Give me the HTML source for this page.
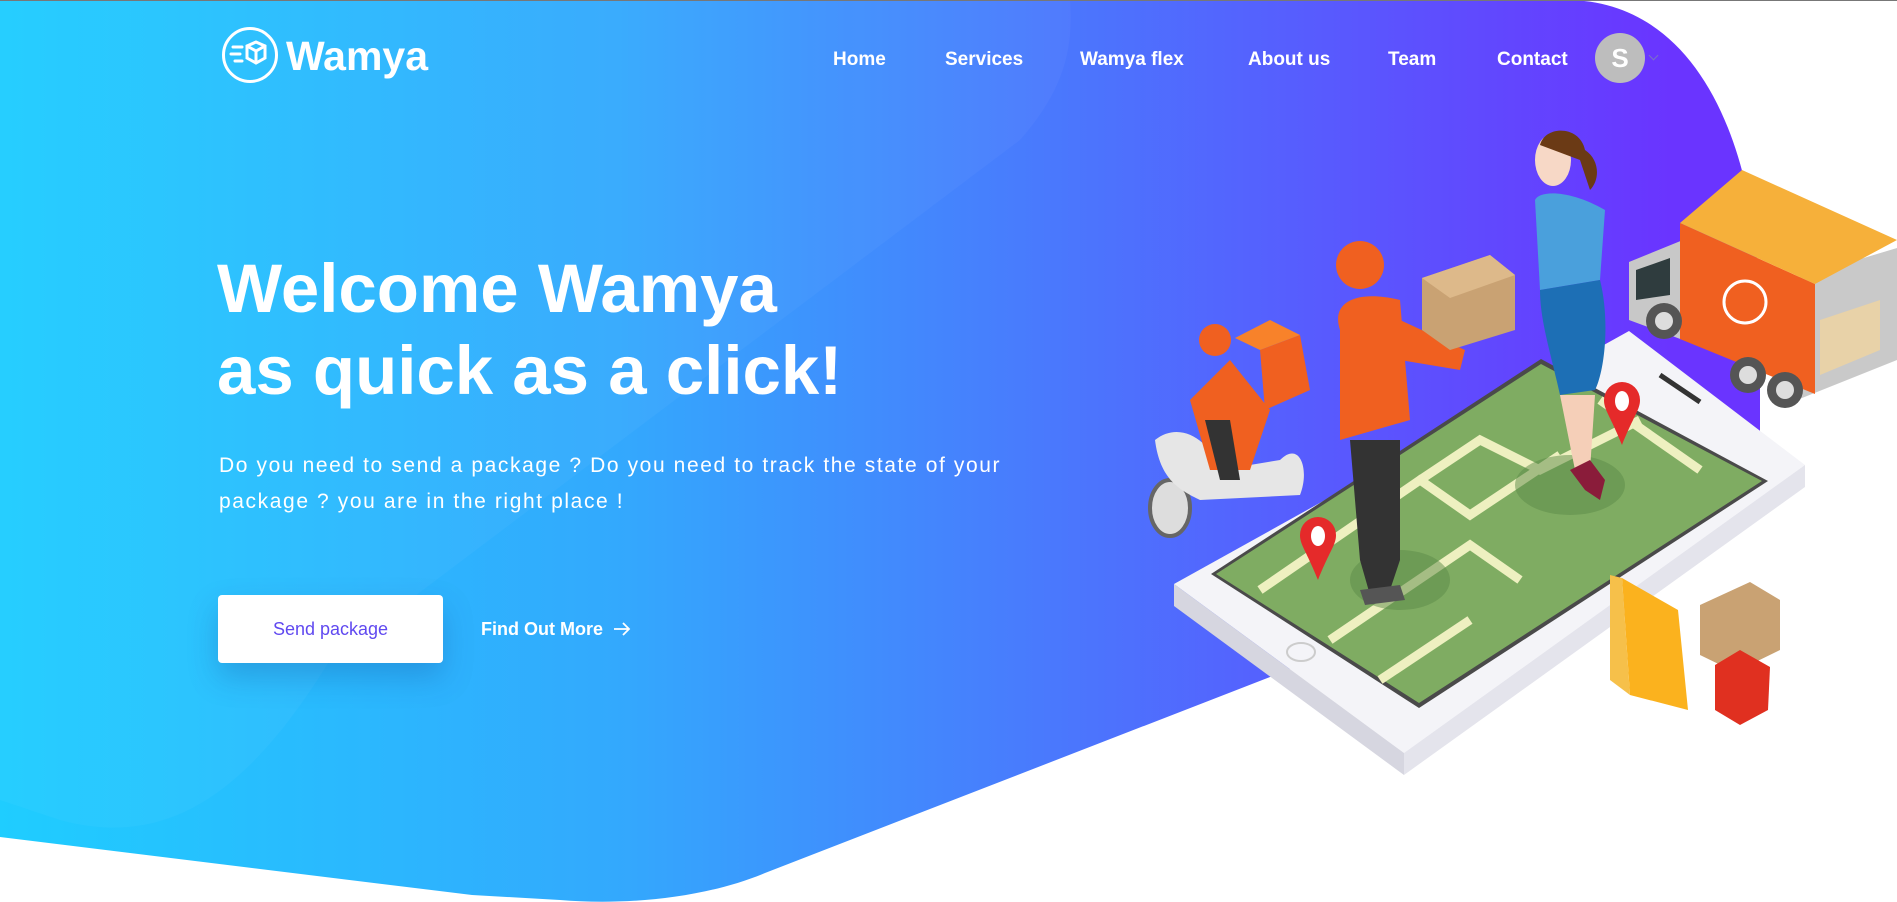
<!DOCTYPE html>
<html><head><meta charset="utf-8"><style>
html,body{margin:0;padding:0;}
body{width:1897px;height:902px;overflow:hidden;background:#fff;position:relative;font-family:"Liberation Sans",sans-serif;}
svg.bg{position:absolute;left:0;top:0;}
.topline{position:absolute;left:0;top:0;width:1897px;height:1px;background:#777;}
.logo{position:absolute;left:222px;top:27px;width:56px;height:56px;border:3px solid #fff;border-radius:50%;box-sizing:border-box;}
.logotext{position:absolute;left:286px;top:33px;color:#fff;font-weight:bold;font-size:41px;}
.nav{position:absolute;top:49px;color:#fff;font-size:19px;font-weight:bold;}
.avatar{position:absolute;left:1595px;top:33px;width:50px;height:50px;border-radius:50%;background:#bdbdbd;color:#fff;font-size:26px;font-weight:bold;text-align:center;line-height:50px;}
.caret{position:absolute;left:1650px;top:52px;width:6px;height:6px;border-right:1.5px solid #7a70c8;border-bottom:1.5px solid #7a70c8;transform:rotate(45deg);}
h1{position:absolute;left:217px;top:248px;margin:0;color:#fff;font-size:69px;line-height:82px;font-weight:bold;letter-spacing:0px;}
p{position:absolute;left:219px;top:448px;margin:0;color:#fff;font-size:21px;line-height:36px;width:1000px;letter-spacing:1.6px;}
.btn{position:absolute;left:218px;top:595px;width:225px;height:68px;background:#fff;border-radius:4px;box-shadow:0 14px 30px rgba(20,60,140,.25);color:#6049f0;font-size:18px;text-align:center;line-height:68px;}
.more{position:absolute;left:481px;top:619px;color:#fff;font-size:18px;font-weight:bold;}
</style></head><body>
<svg class="bg" width="1897" height="902" viewBox="0 0 1897 902">
<defs>
<linearGradient id="g" x1="0" y1="0" x2="1" y2="0">
<stop offset="0" stop-color="#1fcdff"/>
<stop offset="0.35" stop-color="#33a9fd"/>
<stop offset="0.6" stop-color="#4a78fd"/>
<stop offset="0.95" stop-color="#6a34ff"/>
</linearGradient>
</defs>
<path d="M0,0 H1566 C1700,0 1760,150 1760,320 L1760,470 L1283,672 L765,873 C700,900 620,905 560,900 L472,895 L0,837 Z" fill="url(#g)"/>
<path d="M0,0 H1070 C1075,60 1055,100 1020,140 L330,660 C250,790 170,850 60,820 L0,800 Z" fill="#fff" opacity="0.035"/>
<polygon points="1174,584 1404,753 1805,465 1629,331" fill="#f4f4f8"/>
<polygon points="1174,584 1404,753 1404,775 1174,606" fill="#d6d6e0"/>
<polygon points="1404,753 1805,465 1805,487 1404,775" fill="#e4e4ec"/>
<polygon points="1211,574 1419,708 1768,481 1541,359" fill="#4a4a4a"/>
<polygon points="1216,574 1419,703 1762,481 1541,364" fill="#7fac62"/>
<g stroke="#eef0c0" stroke-width="9" fill="none">
<path d="M1260,590 L1420,480 L1470,515 L1560,455"/>
<path d="M1330,640 L1470,545 L1520,580"/>
<path d="M1420,480 L1480,440 L1540,470 L1640,420"/>
<path d="M1600,400 L1700,470"/>
<path d="M1380,680 L1470,620"/>
</g>
<ellipse cx="1301" cy="652" rx="14" ry="9" fill="none" stroke="#ccc" stroke-width="2"/>
<line x1="1660" y1="375" x2="1700" y2="402" stroke="#333" stroke-width="5"/>
<path d="M1318,580 c-12,-30 -18,-35 -18,-45 a18,18 0 0 1 36,0 c0,10 -6,15 -18,45z" fill="#e52a2a"/>
<ellipse cx="1318" cy="536" rx="7" ry="10" fill="#fff"/>
<path d="M1622,445 c-12,-30 -18,-35 -18,-45 a18,18 0 0 1 36,0 c0,10 -6,15 -18,45z" fill="#e52a2a"/>
<ellipse cx="1622" cy="401" rx="7" ry="10" fill="#fff"/>
<ellipse cx="1400" cy="580" rx="50" ry="30" fill="#5c8a48" opacity=".5"/>
<ellipse cx="1570" cy="485" rx="55" ry="30" fill="#5c8a48" opacity=".5"/>
<polygon points="1629,262 1683,240 1683,340 1629,320" fill="#c8c8c8"/>
<polygon points="1636,270 1670,258 1670,295 1636,300" fill="#2f3c3e"/>
<polygon points="1797,278 1897,248 1897,360 1797,400" fill="#c9c9c9"/>
<polygon points="1680,223 1815,284 1815,394 1680,339" fill="#f06020"/>
<polygon points="1680,223 1742,170 1897,240 1815,284" fill="#f6b03a"/>
<circle cx="1745" cy="302" r="21" fill="none" stroke="#fff" stroke-width="3"/>
<polygon points="1820,320 1880,300 1880,350 1820,375" fill="#e8d2a8"/>
<circle cx="1664" cy="321" r="18" fill="#555"/><circle cx="1664" cy="321" r="9" fill="#ddd"/>
<circle cx="1748" cy="375" r="18" fill="#555"/><circle cx="1748" cy="375" r="9" fill="#ddd"/>
<circle cx="1785" cy="390" r="18" fill="#555"/><circle cx="1785" cy="390" r="9" fill="#ddd"/>
<ellipse cx="1170" cy="508" rx="20" ry="28" fill="#ddd" stroke="#666" stroke-width="4"/>
<path d="M1155,440 C1180,420 1210,440 1220,470 L1280,460 C1300,440 1310,470 1300,495 L1200,500 C1180,490 1160,480 1155,440z" fill="#e6e6e6"/>
<path d="M1190,400 L1230,360 L1270,410 L1250,470 L1210,470z" fill="#f06020"/>
<polygon points="1260,350 1300,335 1310,390 1265,410" fill="#f06020"/>
<polygon points="1235,338 1270,320 1300,335 1260,350" fill="#f8822a"/>
<circle cx="1215" cy="340" r="16" fill="#f06020"/>
<path d="M1205,420 L1220,480 L1240,480 L1230,420z" fill="#333"/>
<path d="M1340,330 C1330,300 1360,290 1400,300 L1410,420 L1340,440z" fill="#f06020"/>
<path d="M1400,320 L1465,350 L1460,370 L1400,360z" fill="#f06020"/>
<circle cx="1360" cy="265" r="24" fill="#f06020"/>
<path d="M1345,440 L1400,440 L1400,560 L1390,590 L1370,595 L1360,560 L1350,440z" fill="#333"/>
<path d="M1360,590 L1400,585 L1405,600 L1365,605z" fill="#555"/>
<polygon points="1422,278 1490,255 1515,275 1515,330 1450,350 1422,330" fill="#c9a273"/>
<polygon points="1422,278 1490,255 1515,275 1450,298" fill="#ddb98a"/>
<ellipse cx="1553" cy="160" rx="18" ry="26" fill="#f7d8c6"/>
<path d="M1540,145 C1545,125 1580,125 1585,150 C1600,160 1600,180 1590,190 L1580,160z" fill="#6b3a15"/>
<path d="M1535,200 C1540,190 1570,190 1605,210 L1600,280 L1540,290z" fill="#4aa0dc"/>
<path d="M1540,290 L1600,280 C1610,320 1605,370 1595,390 L1560,395 C1550,350 1540,320 1540,290z" fill="#1d6fb5"/>
<path d="M1560,395 L1575,470 L1580,480 L1590,470 L1595,395z" fill="#f5cfb8"/>
<path d="M1570,470 L1585,490 L1600,500 L1605,480 L1590,460z" fill="#8a1c3a"/>
<polygon points="1622,578 1678,610 1688,710 1630,695" fill="#fbb21e"/>
<polygon points="1610,575 1622,578 1630,695 1610,680" fill="#f6c04a"/>
<polygon points="1700,605 1750,582 1780,600 1780,650 1735,672 1700,655" fill="#c9a273"/>
<polygon points="1715,665 1740,650 1770,667 1768,710 1740,725 1715,710" fill="#e03020"/>
</svg>
<div class="topline"></div>
<div class="logo"><svg width="50" height="50" viewBox="0 0 50 50"><g stroke="#fff" stroke-width="3" fill="none" stroke-linecap="round"><path d="M8,17 H17 M6,24 H15 M10,31 H17"/><path d="M22,16 L31,12 L40,16 L40,28 L31,33 L22,28 Z M22,16 L31,21 L40,16 M31,21 V33"/></g></svg></div>
<div class="logotext">Wamya</div>
<div class="nav" style="left:833px">Home</div>
<div class="nav" style="left:945px">Services</div>
<div class="nav" style="left:1080px">Wamya flex</div>
<div class="nav" style="left:1248px">About us</div>
<div class="nav" style="left:1388px">Team</div>
<div class="nav" style="left:1497px">Contact</div>
<div class="avatar">S</div>
<div class="caret"></div>
<h1>Welcome Wamya<br>as quick as a click!</h1>
<p>Do you need to send a package ? Do you need to track the state of your<br>package ? you are in the right place !</p>
<div class="btn">Send package</div>
<div class="more">Find Out More &nbsp;<svg width="18" height="14" viewBox="0 0 18 14" style="vertical-align:-1px"><path d="M1,7 H16 M10,1 L16,7 L10,13" stroke="#fff" stroke-width="1.8" fill="none"/></svg></div>
</body></html>
